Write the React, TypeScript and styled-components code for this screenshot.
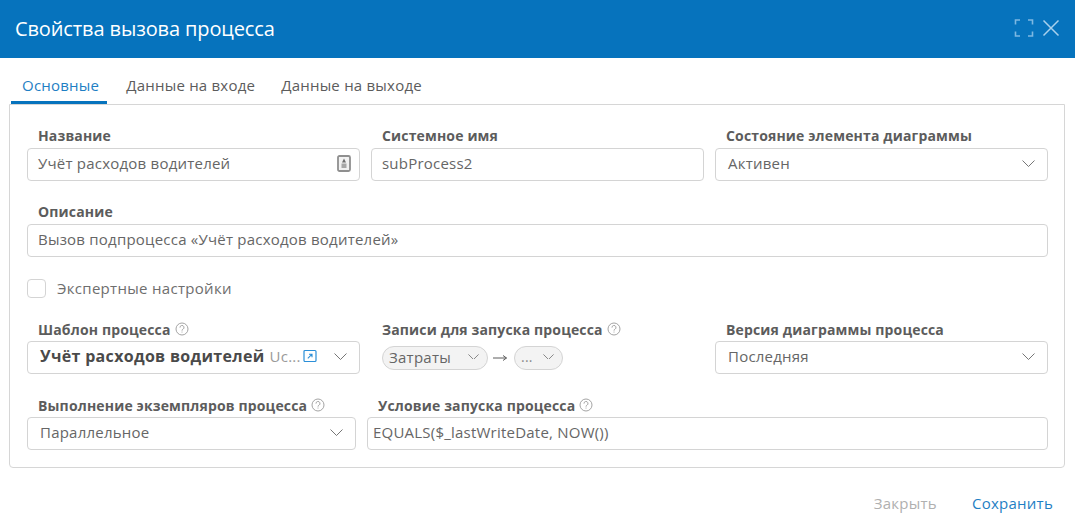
import styled, { createGlobalStyle } from 'styled-components';

const GlobalStyle = createGlobalStyle`
    html, body {
        margin: 0;
        padding: 0;
        background: #ffffff;
        font-family: "Open Sans", "Noto Sans", sans-serif;
        color: #5c5c5c;
    }
`;

const Dialog = styled.div`
    width: 1075px;
    height: 516px;
    overflow: hidden;
    display: flex;
    flex-direction: column;
`;

/* Header */
const Header = styled.header`
    height: 58px;
    box-sizing: border-box;
    flex: none;
    background: #0673bd;
    display: flex;
    align-items: center;
    justify-content: space-between;
    padding: 0 15px 2px;
`;

const Title = styled.h1`
    margin: 0;
    font-size: 20px;
    font-weight: 400;
    color: #ffffff;
    letter-spacing: -0.12px;
`;

const HeaderIcons = styled.div`
    display: flex;
    align-items: center;
    gap: 8px;
`;

/* Tabs */
const TabBar = styled.nav`
    display: flex;
    height: 46px;
    flex: none;
    padding-left: 11px;
    align-items: flex-end;
`;

const Tab = styled.div<{ $active?: boolean }>`
    height: 34px;
    box-sizing: border-box;
    padding: ${({ $active }) => ($active ? '0 8px 1px 11px' : '0 13px 1px')};
    margin-right: ${({ $active }) => ($active ? '6px' : '0')};
    display: flex;
    align-items: center;
    font-size: 15px;
    letter-spacing: 0.22px;
    color: ${({ $active }) => ($active ? '#1f7fc4' : '#5c5c5c')};
    border-bottom: 3px solid ${({ $active }) => ($active ? '#0673bd' : 'transparent')};
`;

const Panel = styled.section`
    box-sizing: border-box;
    margin: 0 10px 0 9px;
    height: 364px;
    border: 1px solid #d6d6d6;
    border-radius: 0 0 4px 4px;
    padding: 20px 16px 0 17px;
`;

const Row = styled.div`
    display: grid;
    grid-template-columns: repeat(3, 333px);
    column-gap: 11px;
`;

const LastRow = styled.div`
    display: grid;
    grid-template-columns: 329px 681px;
    column-gap: 11px;
    margin-top: 20px;
`;

const Field = styled.div<{ $gap?: number }>`
    margin-top: ${({ $gap }) => $gap ?? 0}px;
`;

const Label = styled.label<{ $low?: boolean }>`
    display: flex;
    align-items: center;
    gap: 4px;
    height: 20px;
    box-sizing: border-box;
    margin-bottom: 3px;
    padding-left: 11px;
    padding-top: ${({ $low }) => ($low ? '2px' : '0')};
    font-size: 14px;
    font-weight: 700;
    letter-spacing: 0.15px;
    color: #5c5c5c;
    white-space: nowrap;
`;

const Box = styled.div<{ $pad?: number }>`
    box-sizing: border-box;
    height: 33px;
    border: 1px solid #d4d4d4;
    border-radius: 4px;
    display: flex;
    align-items: center;
    justify-content: space-between;
    padding: 0 ${({ $pad }) => $pad ?? 10}px 3px;
    font-size: 15px;
    letter-spacing: 0.22px;
    color: #666666;
    white-space: nowrap;
    background: #ffffff;
`;

const RecordsRow = styled.div`
    height: 33px;
    display: flex;
    align-items: center;
    padding-left: 11px;
    color: #666666;
`;

const Chip = styled.div<{ $width: number }>`
    box-sizing: border-box;
    width: ${({ $width }) => $width}px;
    height: 24px;
    border: 1px solid #d4d4d4;
    border-radius: 12px;
    background: #f3f3f3;
    display: flex;
    align-items: center;
    justify-content: space-between;
    padding: 0 8px 2px 6px;
    font-size: 15px;
    letter-spacing: 0.25px;
`;

const Dots = styled.span`
    font-size: 14px;
    color: #8a8a8a;
`;

const Arrow = styled.svg`
    margin: 0 7px 0 5px;
    flex: none;
`;

const CheckRow = styled.div`
    display: flex;
    align-items: center;
    gap: 11px;
    height: 19px;
    margin-top: 22px;
    font-size: 15px;
    letter-spacing: 0.3px;
    color: #6e6e6e;
`;

const CheckBox = styled.span`
    box-sizing: border-box;
    width: 19px;
    height: 19px;
    border: 1px solid #d4d4d4;
    border-radius: 4px;
`;

const CheckText = styled.span`
    padding-bottom: 2px;
`;

const TemplateValue = styled.span`
    display: flex;
    align-items: center;
    min-width: 0;
`;

const TemplateName = styled.strong`
    font-size: 16px;
    font-weight: 700;
    letter-spacing: 0.32px;
    color: #4a4a4a;
`;

const TemplateCode = styled.span`
    margin-left: 5px;
    font-size: 15px;
    color: #9a9a9a;
`;

const ExternalLink = styled.svg`
    margin-left: 2px;
    flex: none;
`;

const NameIcon = styled.svg`
    margin-right: -2px;
    flex: none;
`;

/* Footer */
const Footer = styled.footer`
    flex: 1;
    display: flex;
    justify-content: flex-end;
    align-items: center;
    gap: 35px;
    padding: 22px 22px 0 0;
    box-sizing: border-box;
`;

const FooterButton = styled.button<{ $primary?: boolean }>`
    padding: 0;
    border: none;
    background: none;
    font-family: inherit;
    font-size: 15px;
    letter-spacing: 0.25px;
    color: ${({ $primary }) => ($primary ? '#1f7fc4' : '#b0b0b0')};
`;

const Help = () => (
    <svg width="14" height="14" viewBox="0 0 14 14" fill="none" stroke="#9a9a9a">
        <circle cx="7" cy="7" r="6" strokeWidth="0.9" />
        <path d="M5 5.6a2 2 0 1 1 3 1.6c-.7.4-1 .8-1 1.4" strokeWidth="0.9" />
        <path d="M7 9.6v.9" strokeWidth="0.9" />
    </svg>
);

const Chevron = ({ width = 13 }: { width?: number }) => (
    <svg width={width} height={(width * 7) / 13} viewBox="0 0 13 7" fill="none" stroke="#666666" strokeWidth="0.9">
        <path d="M.5.5l6 6 6-6" />
    </svg>
);

export default function App() {
    return (
        <Dialog>
            <GlobalStyle />
            <Header>
                <Title>Свойства вызова процесса</Title>
                <HeaderIcons>
                    <svg width="20" height="20" viewBox="0 0 20 20" fill="none" stroke="#7db8e2" strokeWidth="1.6">
                        <path d="M6 2H1.5v4.5M14 2h4.5v4.5M1.5 13.5V18H6M18.5 13.5V18H14" />
                    </svg>
                    <svg width="18" height="18" viewBox="0 0 18 18" fill="none" stroke="#a8d0ec" strokeWidth="1.5">
                        <path d="M1.5 1.5l15 15M16.5 1.5l-15 15" />
                    </svg>
                </HeaderIcons>
            </Header>
            <TabBar>
                <Tab $active>Основные</Tab>
                <Tab>Данные на входе</Tab>
                <Tab>Данные на выходе</Tab>
            </TabBar>
            <Panel>
                <Row>
                    <Field>
                        <Label>Название</Label>
                        <Box>
                            Учёт расходов водителей
                            <NameIcon width="14" height="17" viewBox="0 0 14 17">
                                <rect x="1" y="1" width="12" height="15" rx="1.5" fill="#f2f2f2" stroke="#8f8f8f" strokeWidth="1.8" />
                                <path d="M7 3.5l2 4H5z" fill="#6e6e6e" />
                                <rect x="4.5" y="8.5" width="5" height="4.5" fill="#a8a8a8" />
                            </NameIcon>
                        </Box>
                    </Field>
                    <Field>
                        <Label>Системное имя</Label>
                        <Box>subProcess2</Box>
                    </Field>
                    <Field>
                        <Label>Состояние элемента диаграммы</Label>
                        <Box $pad={12}>
                            Активен
                            <Chevron />
                        </Box>
                    </Field>
                </Row>
                <Field $gap={20}>
                    <Label>Описание</Label>
                    <Box>Вызов подпроцесса «Учёт расходов водителей»</Box>
                </Field>
                <CheckRow>
                    <CheckBox />
                    <CheckText>Экспертные настройки</CheckText>
                </CheckRow>
                <Field $gap={20}>
                    <Row>
                        <Field>
                            <Label $low>
                                Шаблон процесса
                                <Help />
                            </Label>
                            <Box $pad={12}>
                                <TemplateValue>
                                    <TemplateName>Учёт расходов водителей</TemplateName>
                                    <TemplateCode>Uc...</TemplateCode>
                                    <ExternalLink width="14" height="14" viewBox="0 0 14 14" fill="none" stroke="#2b8fd8">
                                        <rect x="1" y="1.5" width="12" height="11" rx="1" strokeWidth="1.2" />
                                        <path d="M4.8 9.4l4-4M6 5.2h3v3" strokeWidth="1.1" />
                                    </ExternalLink>
                                </TemplateValue>
                                <Chevron />
                            </Box>
                        </Field>
                        <Field>
                            <Label $low>
                                Записи для запуска процесса
                                <Help />
                            </Label>
                            <RecordsRow>
                                <Chip $width={106}>
                                    Затраты
                                    <Chevron width={11} />
                                </Chip>
                                <Arrow width="14" height="10" viewBox="0 0 14 10" fill="none" stroke="#5c5c5c" strokeWidth="1">
                                    <path d="M0 5h13.5M10 2.5L13.5 5 10 7.5" />
                                </Arrow>
                                <Chip $width={49}>
                                    <Dots>...</Dots>
                                    <Chevron width={11} />
                                </Chip>
                            </RecordsRow>
                        </Field>
                        <Field>
                            <Label $low>Версия диаграммы процесса</Label>
                            <Box $pad={12}>
                                Последняя
                                <Chevron />
                            </Box>
                        </Field>
                    </Row>
                </Field>
                <LastRow>
                    <Field>
                        <Label $low>
                            Выполнение экземпляров процесса
                            <Help />
                        </Label>
                        <Box $pad={12}>
                            Параллельное
                            <Chevron />
                        </Box>
                    </Field>
                    <Field>
                        <Label $low>
                            Условие запуска процесса
                            <Help />
                        </Label>
                        <Box $pad={5}>EQUALS($_lastWriteDate, NOW())</Box>
                    </Field>
                </LastRow>
            </Panel>
            <Footer>
                <FooterButton>Закрыть</FooterButton>
                <FooterButton $primary>Сохранить</FooterButton>
            </Footer>
        </Dialog>
    );
}
